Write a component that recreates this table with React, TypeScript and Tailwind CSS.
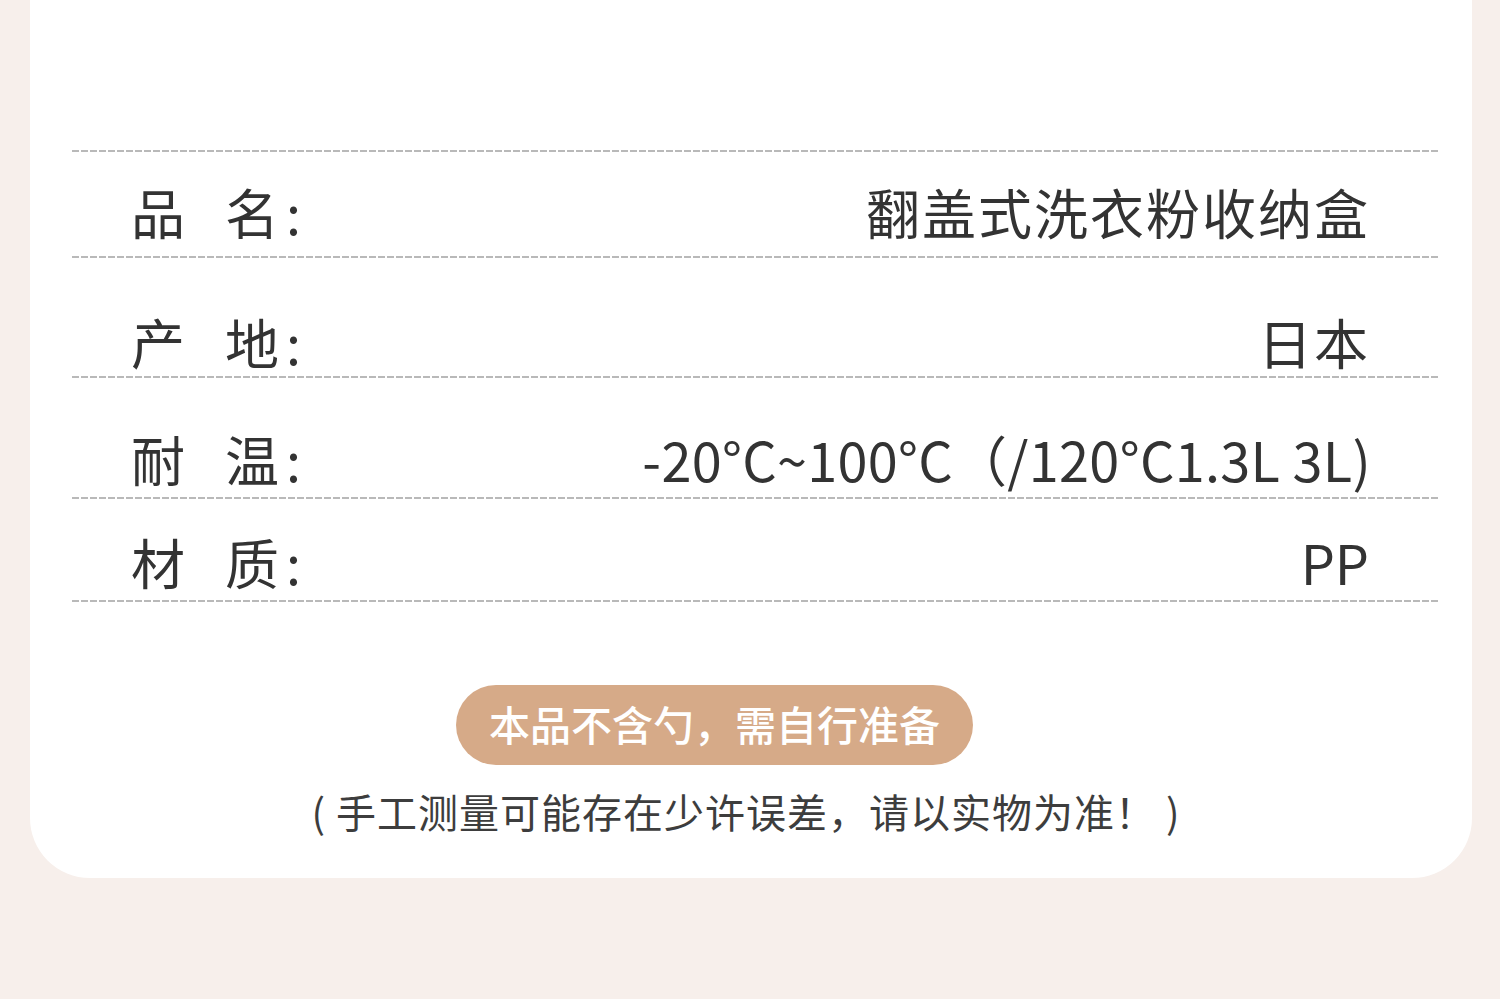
import React from "react";

const font = { fontFamily: '"Noto Sans CJK SC", "Noto Sans", sans-serif' };

function Dash() {
  return (
    <div className="h-[2px] w-full bg-[linear-gradient(to_right,#b9b9b9_7px,transparent_7px)] bg-[length:9px_2px] bg-repeat-x" />
  );
}

function Row({
  a,
  b,
  value,
  h,
  pt,
  vcls,
}: {
  a: string;
  b: string;
  value: string;
  h: string;
  pt: string;
  vcls: string;
}) {
  return (
    <div className={`flex items-center justify-between pl-[59px] ${h} ${pt}`}>
      <div className="flex items-center text-[54px] leading-none text-[#333333]">
        <span>{a}</span>
        <span className="ml-[40px]">{b}</span>
        <span className="ml-[7px]">:</span>
      </div>
      <div className={`text-[54px] leading-none text-[#333333] whitespace-pre ${vcls}`}>{value}</div>
    </div>
  );
}

export default function App() {
  return (
    <div className="w-[1500px] h-[999px] overflow-hidden bg-[#f7efeb]" style={font}>
      <div className="ml-[30px] w-[1442px] h-[878px] rounded-b-[60px] bg-white pt-[150px] pl-[42px] pr-[34px]">
        <Dash />
        <Row a="品" b="名" value="翻盖式洗衣粉收纳盒" h="h-[104px]" pt="pt-[16px]" vcls="tracking-[2px] pr-[68px]" />
        <Dash />
        <Row a="产" b="地" value="日本" h="h-[118px]" pt="pt-[50px]" vcls="tracking-[2px] pr-[68px]" />
        <Dash />
        <Row a="耐" b="温" value="-20°C~100°C（/120°C1.3L 3L)" h="h-[119px]" pt="pt-[43px]" vcls="tracking-[0.3px] pr-[67px]" />
        <Dash />
        <Row a="材" b="质" value="PP" h="h-[101px]" pt="pt-[25px]" vcls="pr-[69px]" />
        <Dash />
        <div className="mt-[83px] ml-[384px] flex h-[80px] w-[517px] items-center justify-center rounded-full bg-[#d6aa88] pb-[4px]">
          <span className="text-[41px] font-medium leading-none text-white">本品不含勺，需自行准备</span>
        </div>
        <div className="mt-[26px] -ml-[42px] -mr-[34px] text-center text-[40px] tracking-[1px] leading-none text-[#3d3d3d] pr-[10px]">
          ( 手工测量可能存在少许误差，请以实物为准！ )
        </div>
      </div>
    </div>
  );
}
